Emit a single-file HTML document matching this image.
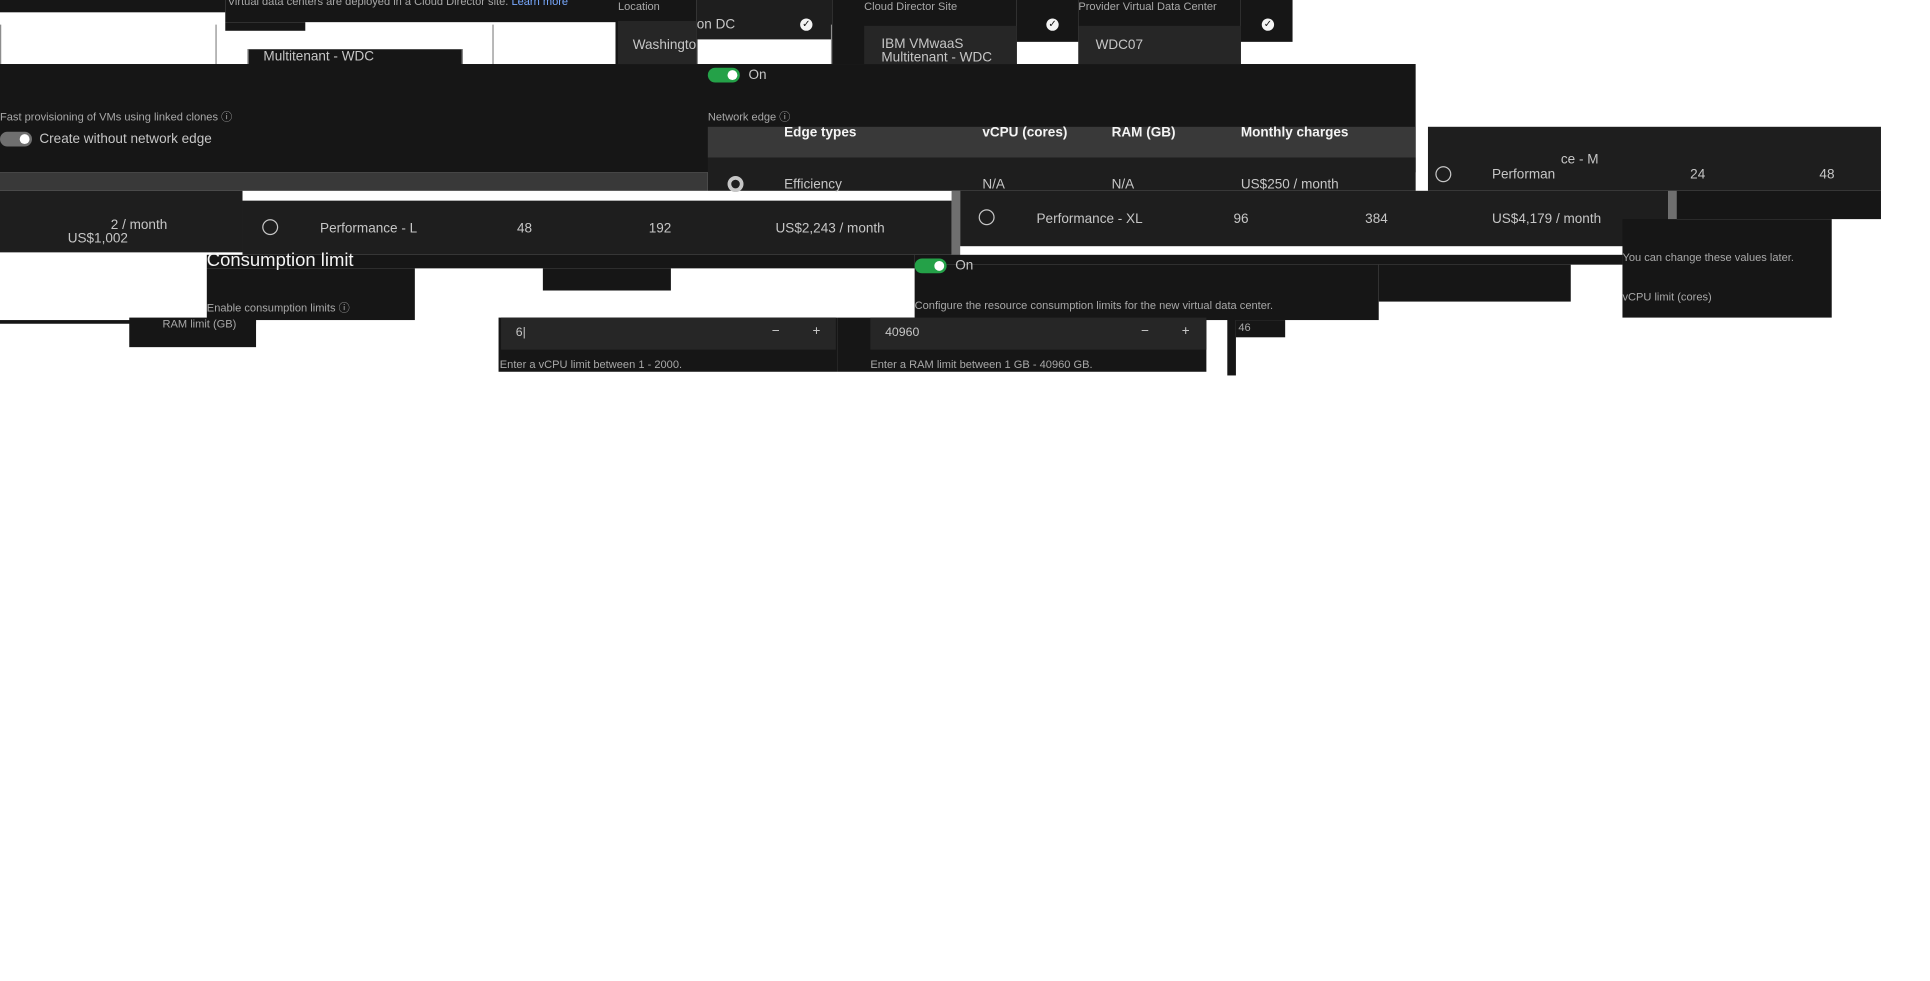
<!DOCTYPE html>
<html><head><meta charset="utf-8"><style>
html,body{margin:0;padding:0;background:#fff;width:1930px;height:981px;overflow:hidden}
#w{position:absolute;left:0;top:0;width:1568px;height:797px;transform:scale(1.231);transform-origin:0 0;font-family:"Liberation Sans",sans-serif;color:#c6c6c6}
.b{position:absolute;background:#161616}
.g{position:absolute;background:#262626}
.t{position:absolute;white-space:nowrap;font-size:11px;color:#c6c6c6}
.s{font-size:9px;color:#a8a8a8}
.h{font-weight:bold;color:#f4f4f4;font-size:11px}
.ck{position:absolute;width:10px;height:10px;border-radius:50%;background:#f4f4f4;color:#161616;font-size:8px;line-height:10px;text-align:center}
.tg{position:absolute;width:26px;height:12px;border-radius:6px;background:#24a148}
.tg:after{content:"";position:absolute;right:2px;top:2px;width:8px;height:8px;border-radius:50%;background:#fff}
.rd{position:absolute;width:11px;height:11px;border:1px solid #c6c6c6;border-radius:50%}
.bo{position:absolute;border:1px solid #8d8d8d}
</style></head><body><div id="w">
<div class="b" style="left:0;top:0;width:183px;height:10px"></div>
<div class="b" style="left:183px;top:0;width:317px;height:18px"></div>
<div class="b" style="left:183px;top:18px;width:65px;height:7px"></div>
<div class="t s" style="left:185px;top:-4px">Virtual data centers are deployed in a Cloud Director site. <span style="color:#78a9ff">Learn more</span></div>
<div class="bo" style="left:0;top:20px;width:174px;height:34px;border-top:none"></div>
<div class="b" style="left:201px;top:40px;width:173px;height:26px;border:1px solid #8d8d8d;border-top:none"></div>
<div class="t" style="left:214px;top:40px">Multitenant - WDC</div>
<div class="bo" style="left:400px;top:20px;width:165px;height:36px;border-top:none"></div>
<div class="b" style="left:500px;top:0;width:66px;height:52px"></div>
<div class="t s" style="left:502px;top:0">Location</div>
<div class="g" style="left:502px;top:17px;width:64px;height:35px"></div>
<div class="t" style="left:514px;top:31px">Washingto</div>
<div class="b" style="left:566px;top:0;width:110px;height:32px;background:#1e1e1e"></div>
<div class="t" style="left:566px;top:14px">on DC</div>
<div class="ck" style="left:650px;top:15px">✓</div>
<div class="b" style="left:675px;top:20px;width:1px;height:32px;background:#8d8d8d"></div>
<div class="b" style="left:676px;top:0;width:150px;height:52px"></div>
<div class="t s" style="left:702px;top:0">Cloud Director Site</div>
<div class="g" style="left:702px;top:21px;width:124px;height:31px"></div>
<div class="t" style="left:716px;top:31px;line-height:11px">IBM VMwaaS<br>Multitenant - WDC</div>
<div class="b" style="left:826px;top:0;width:50px;height:34px"></div>
<div class="ck" style="left:850px;top:15px">✓</div>
<div class="b" style="left:876px;top:0;width:132px;height:52px"></div>
<div class="t s" style="left:876px;top:0">Provider Virtual Data Center</div>
<div class="g" style="left:876px;top:21px;width:132px;height:31px"></div>
<div class="t" style="left:890px;top:31px">WDC07</div>
<div class="b" style="left:1008px;top:0;width:42px;height:34px"></div>
<div class="ck" style="left:1025px;top:15px">✓</div>
<div class="b" style="left:0;top:52px;width:1150px;height:88px"></div>
<div class="tg" style="left:575px;top:55px"></div><div class="t" style="left:608px;top:55px">On</div>
<div class="t s" style="left:0;top:88px">Fast provisioning of VMs using linked clones ⓘ</div>
<div class="tg" style="left:0;top:107px;background:#6f6f6f"></div>
<div class="t" style="left:32px;top:107px">Create without network edge</div>
<div class="t s" style="left:575px;top:88px">Network edge ⓘ</div>
<div class="b" style="left:0;top:140px;width:575px;height:15px;background:#393939"></div>
<div class="b" style="left:575px;top:103px;width:575px;height:25px;background:#393939"></div>
<div class="t h" style="left:637px;top:102px">Edge types</div>
<div class="t h" style="left:798px;top:102px">vCPU (cores)</div>
<div class="t h" style="left:903px;top:102px">RAM (GB)</div>
<div class="t h" style="left:1008px;top:102px">Monthly charges</div>
<div class="b" style="left:575px;top:128px;width:575px;height:27px;background:#1e1e1e"></div>
<div class="rd" style="left:591px;top:143px;border-width:3px;width:7px;height:7px"></div>
<div class="t" style="left:637px;top:144px">Efficiency</div>
<div class="t" style="left:798px;top:144px">N/A</div>
<div class="t" style="left:903px;top:144px">N/A</div>
<div class="t" style="left:1008px;top:144px">US$250 / month</div>
<div class="b" style="left:0;top:155px;width:197px;height:50px;background:#1e1e1e"></div>
<div class="t" style="left:90px;top:177px">2 / month</div>
<div class="t" style="left:55px;top:188px">US$1,002</div>
<div class="b" style="left:197px;top:163px;width:576px;height:44px;background:#1e1e1e"></div>
<div class="rd" style="left:213px;top:178px"></div>
<div class="t" style="left:260px;top:180px">Performance - L</div>
<div class="t" style="left:420px;top:180px">48</div>
<div class="t" style="left:527px;top:180px">192</div>
<div class="t" style="left:630px;top:180px">US$2,243 / month</div>
<div class="b" style="left:773px;top:155px;width:7px;height:55px;background:#6f6f6f"></div>
<div class="b" style="left:780px;top:155px;width:575px;height:45px;background:#1e1e1e"></div>
<div class="rd" style="left:795px;top:170px"></div>
<div class="t" style="left:842px;top:172px">Performance - XL</div>
<div class="t" style="left:1002px;top:172px">96</div>
<div class="t" style="left:1109px;top:172px">384</div>
<div class="t" style="left:1212px;top:172px">US$4,179 / month</div>
<div class="b" style="left:1355px;top:155px;width:7px;height:30px;background:#6f6f6f"></div>
<div class="b" style="left:1160px;top:103px;width:368px;height:52px;background:#1e1e1e"></div>
<div class="rd" style="left:1166px;top:135px"></div>
<div class="t" style="left:1212px;top:136px">Performan</div>
<div class="t" style="left:1268px;top:124px">ce - M</div>
<div class="t" style="left:1373px;top:136px">24</div>
<div class="t" style="left:1478px;top:136px">48</div>
<div class="b" style="left:1362px;top:155px;width:166px;height:23px"></div>
<div class="b" style="left:168px;top:207px;width:575px;height:11px"></div>
<div class="b" style="left:168px;top:218px;width:169px;height:42px"></div>
<div class="b" style="left:441px;top:218px;width:104px;height:18px"></div>
<div class="t" style="left:168px;top:203px;font-size:15px;color:#f4f4f4">Consumption limit</div>
<div class="t s" style="left:168px;top:243px">Enable consumption limits ⓘ</div>
<div class="b" style="left:743px;top:207px;width:575px;height:8px"></div>
<div class="b" style="left:743px;top:215px;width:377px;height:45px"></div>
<div class="b" style="left:1120px;top:215px;width:156px;height:30px"></div>
<div class="tg" style="left:743px;top:210px"></div><div class="t" style="left:776px;top:210px">On</div>
<div class="t s" style="left:743px;top:243px">Configure the resource consumption limits for the new virtual data center.</div>
<div class="b" style="left:1318px;top:178px;width:170px;height:80px"></div>
<div class="t s" style="left:1318px;top:204px">You can change these values later.</div>
<div class="t s" style="left:1318px;top:236px">vCPU limit (cores)</div>
<div class="b" style="left:0;top:260px;width:208px;height:3px"></div>
<div class="b" style="left:105px;top:258px;width:103px;height:24px"></div>
<div class="t s" style="left:132px;top:258px">RAM limit (GB)</div>
<div class="b" style="left:405px;top:258px;width:275px;height:44px"></div>
<div class="g" style="left:407px;top:258px;width:272px;height:26px"></div>
<div class="t" style="left:419px;top:265px;font-size:10px">6|</div>
<div class="t" style="left:627px;top:263px">−</div><div class="t" style="left:660px;top:263px">+</div>
<div class="t s" style="left:406px;top:291px">Enter a vCPU limit between 1 - 2000.</div>
<div class="b" style="left:680px;top:258px;width:300px;height:44px"></div>
<div class="g" style="left:707px;top:258px;width:273px;height:26px"></div>
<div class="t" style="left:719px;top:265px;font-size:10px">40960</div>
<div class="t" style="left:927px;top:263px">−</div><div class="t" style="left:960px;top:263px">+</div>
<div class="t s" style="left:707px;top:291px">Enter a RAM limit between 1 GB - 40960 GB.</div>
<div class="b" style="left:997px;top:258px;width:7px;height:47px"></div>
<div class="b" style="left:1004px;top:260px;width:40px;height:14px"></div>
<div class="t s" style="left:1006px;top:261px">46</div>
</div></body></html>
